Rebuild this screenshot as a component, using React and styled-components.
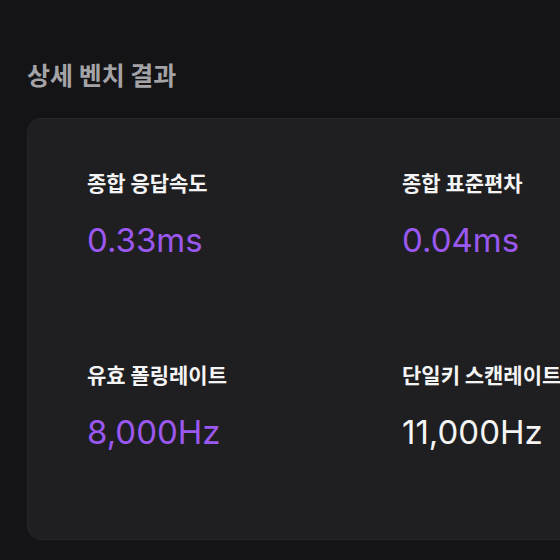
import styled, { createGlobalStyle } from "styled-components";

const GlobalStyle = createGlobalStyle`
  html, body {
    margin: 0;
    padding: 0;
    background: #141416;
    overflow: hidden;
  }
  body {
    font-family: "Noto Sans CJK KR", "Noto Sans", sans-serif;
  }
`;

const Section = styled.section`
  padding: 57px 0 0 27px;
  width: 700px;
`;

const Title = styled.h2`
  margin: 0 0 27px;
  font-size: 25px;
  line-height: 34px;
  font-weight: 700;
  color: #a4a4a8;
`;

const Card = styled.div`
  box-sizing: border-box;
  width: 660px;
  height: 422px;
  padding: 48px 59px;
  background: #1f1f21;
  border: 1px solid #262629;
  border-radius: 14px;
  display: grid;
  grid-template-columns: 315px 315px;
  grid-auto-rows: 192px;
`;

const Stat = styled.div`
  display: flex;
  flex-direction: column;
  gap: 23px;
`;

const Label = styled.div`
  font-size: 21px;
  line-height: 30px;
  font-weight: 700;
  color: #f4f4f5;
  white-space: nowrap;
`;

const Value = styled.div`
  font-family: Inter, "Noto Sans", sans-serif;
  font-size: 33px;
  line-height: 40px;
  font-weight: 400;
  color: ${(p) => (p.$accent ? "#9b58f0" : "#f4f4f5")};
`;

const stats = [
  { label: "종합 응답속도", value: "0.33ms", accent: true },
  { label: "종합 표준편차", value: "0.04ms", accent: true },
  { label: "유효 폴링레이트", value: "8,000Hz", accent: true },
  { label: "단일키 스캔레이트", value: "11,000Hz", accent: false },
];

export default function App() {
  return (
    <>
      <GlobalStyle />
      <Section>
        <Title>상세 벤치 결과</Title>
        <Card>
          {stats.map((s) => (
            <Stat key={s.label}>
              <Label>{s.label}</Label>
              <Value $accent={s.accent}>{s.value}</Value>
            </Stat>
          ))}
        </Card>
      </Section>
    </>
  );
}
